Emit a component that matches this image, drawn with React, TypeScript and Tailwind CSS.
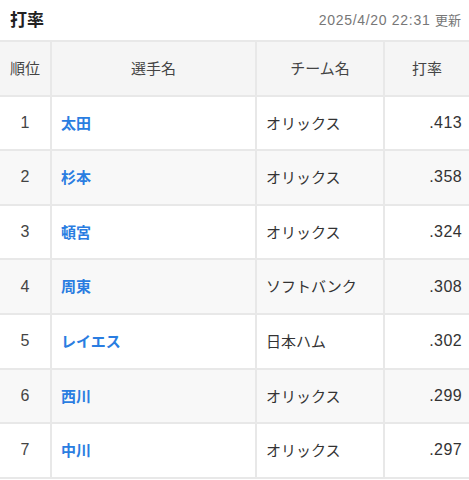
import React from "react";

const rows = [
  { r: 1, n: "太田", t: "オリックス", v: ".413" },
  { r: 2, n: "杉本", t: "オリックス", v: ".358" },
  { r: 3, n: "頓宮", t: "オリックス", v: ".324" },
  { r: 4, n: "周東", t: "ソフトバンク", v: ".308" },
  { r: 5, n: "レイエス", t: "日本ハム", v: ".302" },
  { r: 6, n: "西川", t: "オリックス", v: ".299" },
  { r: 7, n: "中川", t: "オリックス", v: ".297" },
];

const latin = { fontFamily: '"Liberation Sans", "Noto Sans CJK JP", sans-serif' };

export default function App() {
  return (
    <div
      className="w-[469px] h-[480px] overflow-hidden bg-white text-[#333]"
      style={{ fontFamily: '"Noto Sans CJK JP", "Noto Sans", sans-serif' }}
    >
      <div className="h-[40px] flex items-center justify-between pl-[10px] pr-[8px]">
        <span className="text-[17px] font-bold text-[#222] leading-none -mt-[3px]">打率</span>
        <span className="text-[14px] text-[#777] leading-none -mt-[1px] tracking-[0.7px]" style={latin}>
          2025/4/20 22:31 <span className="tracking-normal text-[13px]" style={{ fontFamily: '"Noto Sans CJK JP", sans-serif' }}>更新</span>
        </span>
      </div>
      <div className="grid grid-cols-[50px_203px_126px_1fr] gap-[2px] bg-[#e8e8e8] pt-[2px] pb-[2px]">
        {["順位", "選手名", "チーム名", "打率"].map((h) => (
          <div
            key={h}
            className="h-[52.6px] bg-[#f5f5f5] flex items-center justify-center text-[15px] text-[#444]"
          >
            {h}
          </div>
        ))}
        {rows.map((row, i) => {
          const bg = i % 2 === 1 ? "bg-[#f8f8f8]" : "bg-white";
          return (
            <React.Fragment key={row.r}>
              <div
                className={`h-[52.6px] ${bg} flex items-center justify-center text-[16px] text-[#444]`}
                style={latin}
              >
                {row.r}
              </div>
              <div className={`h-[52.6px] ${bg} flex items-center pl-[9px] text-[15px] font-semibold text-[#2a7de1]`}>
                {row.n}
              </div>
              <div className={`h-[52.6px] ${bg} flex items-center pl-[9px] text-[15px] text-[#333]`}>
                {row.t}
              </div>
              <div
                className={`h-[52.6px] ${bg} flex items-center justify-end pr-[7px] text-[16px] text-[#333] tracking-[0.4px]`}
                style={latin}
              >
                {row.v}
              </div>
            </React.Fragment>
          );
        })}
      </div>
    </div>
  );
}
